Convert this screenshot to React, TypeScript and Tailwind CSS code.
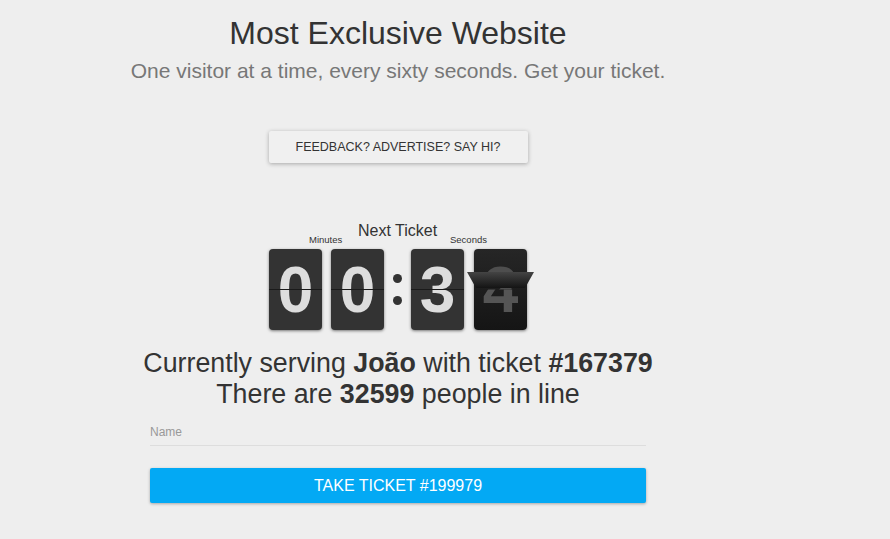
import React from 'react';

function Card({ digit }: { digit: string }) {
  return (
    <div className="relative w-[53px] h-[81px] rounded-[4px] bg-[#333333] shadow-[0_1px_3px_rgba(0,0,0,0.5)] flex items-center justify-center">
      <span className="text-[64px] font-bold leading-none text-[#dddddd]">{digit}</span>
      <div className="absolute left-0 right-0 top-[40px] h-px bg-[#1a1a1a]" />
    </div>
  );
}

function FlipCard() {
  return (
    <div className="relative w-[53px] h-[81px] rounded-[4px] bg-gradient-to-b from-[#262626] to-[#151515] shadow-[0_1px_3px_rgba(0,0,0,0.5)]">
      {/* old digit, top half */}
      <div className="absolute inset-0 flex items-center justify-center [clip-path:inset(0_0_50%_0)]">
        <span className="text-[64px] font-bold leading-none text-[#4e4e4e]">2</span>
      </div>
      {/* new digit, bottom half */}
      <div className="absolute inset-0 flex items-center justify-center [clip-path:inset(50%_0_0_0)]">
        <span className="text-[64px] font-bold leading-none text-[#555555]">4</span>
      </div>
      {/* flap mid-flip */}
      <svg className="absolute left-[-7px] top-[22px]" width="67" height="18" viewBox="0 0 67 18">
        <defs>
          <linearGradient id="flap" x1="0" y1="0" x2="0" y2="1">
            <stop offset="0" stopColor="#444444" />
            <stop offset="1" stopColor="#141414" />
          </linearGradient>
        </defs>
        <polygon points="0,1 67,1 58,17 9,17" fill="url(#flap)" />
      </svg>
    </div>
  );
}

export default function App() {
  return (
    <div className="min-h-screen bg-[#eeeeee] [font-family:'Liberation_Sans',Arial,sans-serif]">
      <div className="w-[796px] flex flex-col items-center">
        <h1 className="mt-[13px] text-[32px] leading-[40px] text-[#333333]">Most Exclusive Website</h1>
        <p className="mt-[6px] text-[21px] leading-[24px] text-[#777777]">
          One visitor at a time, every sixty seconds. Get your ticket.
        </p>

        <button className="mt-[48px] w-[259px] h-[32px] bg-[#f0f0f0] text-[12.5px] text-[#333333] uppercase shadow-[0_1px_4px_rgba(0,0,0,0.3)] rounded-[2px]">
          Feedback? Advertise? Say hi?
        </button>

        <div className="mt-[54px] flex flex-col items-center">
          <div className="relative w-[260px] h-[32px]">
            <span className="absolute left-[41px] top-[16px] text-[9.5px] text-[#333333]">Minutes</span>
            <span className="absolute left-[90px] top-[2px] text-[16px] text-[#333333]">Next Ticket</span>
            <span className="absolute left-[182px] top-[16px] text-[9.5px] text-[#333333]">Seconds</span>
          </div>
          <div className="flex items-center">
            <Card digit="0" />
            <div className="w-[9px]" />
            <Card digit="0" />
            <div className="w-[27px] flex flex-col items-center gap-[13px]">
              <div className="w-[9px] h-[9px] rounded-full bg-[#333333]" />
              <div className="w-[9px] h-[9px] rounded-full bg-[#333333]" />
            </div>
            <Card digit="3" />
            <div className="w-[10px]" />
            <FlipCard />
          </div>
        </div>

        <div className="mt-[18px] text-center text-[26.8px] leading-[31px] text-[#333333]">
          <div>
            Currently serving <b>João</b> with ticket <b>#167379</b>
          </div>
          <div>
            There are <b>32599</b> people in line
          </div>
        </div>

        <div className="mt-[9px] w-[496px] border-b border-[#dddddd] pb-[2px]">
          <input
            placeholder="Name"
            className="w-full bg-transparent outline-none text-[12px] leading-[16px] text-[#333333] placeholder:text-[#999999]"
          />
        </div>

        <button className="mt-[22px] w-[496px] h-[35px] bg-[#03a9f4] text-white text-[16px] uppercase rounded-[2px] shadow-[0_1px_3px_rgba(0,0,0,0.3)]">
          Take ticket #199979
        </button>
      </div>
    </div>
  );
}
